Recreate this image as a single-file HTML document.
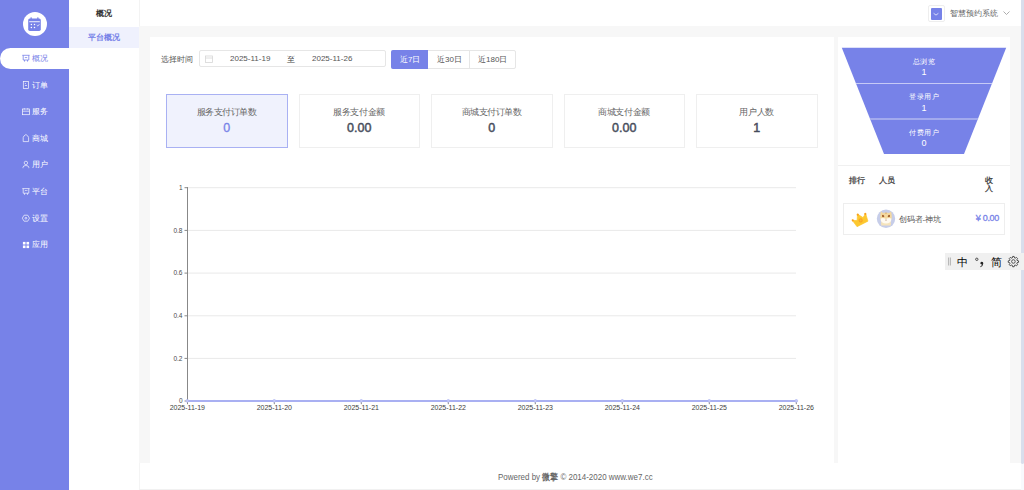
<!DOCTYPE html>
<html><head><meta charset="utf-8">
<style>
*{margin:0;padding:0;box-sizing:border-box}
html,body{width:1024px;height:490px;overflow:hidden;background:#fff;font-family:"Liberation Sans",sans-serif;color:#333}
.abs{position:absolute}
#side{left:0;top:0;width:69px;height:490px;background:#7782e8}
#logo{left:23px;top:12px;width:24px;height:24px;border-radius:50%;background:#fff}
.mi{position:absolute;left:0;width:69px;height:21px;color:#fff;font-size:8px;line-height:22px;font-weight:500}
.mi .ic{position:absolute;left:22px;top:7px;width:7px;height:7px}
.mi .tx{position:absolute;left:32px;top:0}
.mi.on{background:#fff;color:#7782e8;border-radius:11px 0 0 11px;width:70px}
#col2{left:69px;top:0;width:70px;height:490px;background:#fff}
#col2 .hd{position:absolute;left:0;top:0;width:70px;height:26px;line-height:27px;text-align:center;font-size:8px;font-weight:bold;color:#333}
#col2 .it{position:absolute;left:0;top:27px;width:70px;height:21px;line-height:21px;text-align:center;font-size:8px;font-weight:bold;color:#7782e8;background:#eff1fd}
#main{left:139px;top:26px;width:882px;height:437px;background:#f7f7f7}
#hdr{left:139px;top:0;width:882px;height:26px;background:#fff;border-left:1px solid #f3f3f3}
#card{left:150px;top:37px;width:684px;height:426px;background:#fff}
#rp{left:838px;top:37px;width:172px;height:426px;background:#fff}
#foot{left:139px;top:463px;width:882px;height:27px;background:#fff;border-bottom:1px solid #f1f1f1;border-left:1px solid #f4f4f4}
#sb{left:1021px;top:0;width:3px;height:463.5px;background:#d9deec;border-radius:0 0 2px 2px}
#sbt{left:1021px;top:463.5px;width:3px;height:26.5px;background:#f8f9fd}
.lbl{position:absolute;font-size:8px;color:#555;white-space:nowrap}
.stat{position:absolute;top:94px;width:121.5px;height:54px;border:1px solid #efefef;background:#fff;text-align:center}
.stat .t{position:absolute;left:0;right:0;top:11.3px;font-size:9px;letter-spacing:-.45px;text-indent:-.45px;color:#666;line-height:12px}
.stat .v{position:absolute;left:0;right:0;top:26px;font-size:12.5px;font-weight:normal;-webkit-text-stroke:.45px #464c5b;color:#464c5b;line-height:15px}
.stat.on{background:#f0f2fd;border-color:#a9b1f3}
.stat.on .v{color:#7782e8;-webkit-text-stroke:.3px #7782e8}
</style></head><body>
<div id="side" class="abs"></div>
<div id="logo" class="abs"></div>
<div class="mi on" style="top:48px"><span class="tx">概况</span></div>
<div class="mi" style="top:74.6px"><span class="tx">订单</span></div>
<div class="mi" style="top:101.2px"><span class="tx">服务</span></div>
<div class="mi" style="top:127.8px"><span class="tx">商城</span></div>
<div class="mi" style="top:154.4px"><span class="tx">用户</span></div>
<div class="mi" style="top:181px"><span class="tx">平台</span></div>
<div class="mi" style="top:207.6px"><span class="tx">设置</span></div>
<div class="mi" style="top:234.2px"><span class="tx">应用</span></div>

<svg class="abs" style="left:0;top:0" width="69" height="260" viewBox="0 0 69 260">
 <!-- logo calendar -->
 <g fill="#7782e8">
  <rect x="28.2" y="18.5" width="12.6" height="12.4" rx="1.6"/>
  <rect x="30.5" y="17.2" width="1.3" height="2.5" rx=".6"/>
  <rect x="37.2" y="17.2" width="1.3" height="2.5" rx=".6"/>
 </g>
 <rect x="29.2" y="21.3" width="10.6" height="0.9" fill="#fff"/>
 <g fill="#fff">
  <circle cx="31.4" cy="24.4" r=".75"/><circle cx="34.5" cy="24.4" r=".75"/>
  <circle cx="31.4" cy="27.4" r=".75"/><circle cx="34.5" cy="27.4" r=".75"/>
 </g>
 <path d="M36.8 25.2 l.9 .8 l1.6 -1.7" stroke="#fff" stroke-width=".8" fill="none"/>
 <!-- 概况 active -->
 <g stroke="#7782e8" stroke-width=".8" fill="none">
  <path d="M22.3 55.3 H29.6 M23.2 55.3 V60 H28.8 V55.3 M24.5 60 V61.6 M27.5 60 V61.6 M24.8 57.6 H27.2"/>
 </g>
 <g stroke="#fff" stroke-width=".72" fill="none" opacity=".95">
  <!-- 订单 -->
  <rect x="23.3" y="81.5" width="5.3" height="6.9"/>
  <path d="M24.9 83.6 H26 M24.9 85.5 H27"/>
  <!-- 服务 -->
  <rect x="22.6" y="109" width="6.8" height="5.7"/>
  <path d="M22.6 111.2 H29.4 M24.3 108.2 V109.5 M27.7 108.2 V109.5"/>
  <!-- 商城 -->
  <path d="M23.2 141.6 V137.6 Q23.4 135.9 25.9 134.5 Q28.4 135.9 28.6 137.6 V141.6 Z"/>
  <!-- 用户 -->
  <circle cx="25.9" cy="162.9" r="1.7"/>
  <path d="M23 168.2 V167.4 Q23 165.5 25.9 165.5 Q28.8 165.5 28.8 167.4 V168.2"/>
  <!-- 平台 -->
  <path d="M22.3 188.6 H29.6 M23.2 188.6 V193.2 H28.8 V188.6 M24.5 193.2 V194.8 M27.5 193.2 V194.8 M24.6 191.2 L25.6 190.2 L26.4 191 L27.4 190"/>
  <!-- 设置 -->
  <path d="M24.1 215.2 H27.7 L29.5 218.2 L27.7 221.2 H24.1 L22.3 218.2 Z"/>
  <circle cx="25.9" cy="218.2" r=".9"/>
 </g>
 <g fill="#fff">
  <rect x="22.9" y="241.9" width="2.6" height="2.6"/><rect x="26.5" y="241.9" width="2.6" height="2.6"/>
  <rect x="22.9" y="245.5" width="2.6" height="2.6"/><rect x="26.5" y="245.5" width="2.6" height="2.6"/>
 </g>
</svg>
<div id="col2" class="abs"><div class="hd">概况</div><div class="it">平台概况</div></div>
<div id="hdr" class="abs"></div>
<div id="main" class="abs"></div>
<div id="card" class="abs"></div>
<div id="rp" class="abs"></div>
<div id="foot" class="abs"></div>
<div id="sb" class="abs"></div>
<div id="sbt" class="abs"></div>


<div class="abs" style="left:928px;top:5px;width:17px;height:17px;border:1px solid #eee;border-radius:2px;background:#fff"></div>
<div class="abs" style="left:930.5px;top:8px;width:11.5px;height:11.5px;background:#7782e8;border-radius:1px"></div>
<svg class="abs" style="left:930px;top:8px" width="12" height="12"><path d="M3.6 5.3 L6 7.1 L8.4 5.3" stroke="#fff" stroke-width=".7" fill="none"/></svg>
<div class="lbl" style="left:950px;top:8.2px;font-size:8px;color:#5f5f5f">智慧预约系统</div>
<svg class="abs" style="left:1002px;top:10px" width="9" height="7"><path d="M1.5 1.5 L4.5 4.5 L7.5 1.5" stroke="#999" stroke-width=".8" fill="none"/></svg>
<div class="lbl" style="left:160.5px;top:53.5px;font-size:8px">选择时间</div>
<div class="abs" style="left:199px;top:50px;width:187px;height:17px;border:1px solid #e6e6e6;border-radius:2px"></div>
<svg class="abs" style="left:205px;top:55px" width="8" height="8"><rect x=".5" y="1" width="7" height="6.5" fill="none" stroke="#d6d6d6" stroke-width=".8"/><path d="M.5 3 H7.5" stroke="#d6d6d6" stroke-width=".8"/></svg>
<div class="lbl" style="left:230px;top:54.4px">2025-11-19</div>
<div class="lbl" style="left:287px;top:54.4px;color:#444">至</div>
<div class="lbl" style="left:312px;top:54.4px">2025-11-26</div>

<div class="abs" style="left:391px;top:50px;width:125px;height:19px;border:1px solid #e6e6e6;border-radius:2px"></div>
<div class="abs" style="left:391px;top:50px;width:37px;height:19px;background:#7782e8;border-radius:2px 0 0 2px"></div>
<div class="abs" style="left:469px;top:50px;width:1px;height:19px;background:#e6e6e6"></div>
<div class="lbl" style="left:400px;top:54.2px;color:#fff">近7日</div>
<div class="lbl" style="left:437px;top:54.2px">近30日</div>
<div class="lbl" style="left:478px;top:54.2px">近180日</div>

<div class="stat on" style="left:166px"><div class="t">服务支付订单数</div><div class="v">0</div></div>
<div class="stat" style="left:298.5px"><div class="t">服务支付金额</div><div class="v">0.00</div></div>
<div class="stat" style="left:431px"><div class="t">商城支付订单数</div><div class="v">0</div></div>
<div class="stat" style="left:563.5px"><div class="t">商城支付金额</div><div class="v">0.00</div></div>
<div class="stat" style="left:696px"><div class="t">用户人数</div><div class="v">1</div></div>


<svg class="abs" style="left:0;top:0" width="1024" height="490">
 <g stroke="#e9e9e9" stroke-width="1">
  <path d="M187 187.7 H796 M187 230.4 H796 M187 273.1 H796 M187 315.8 H796 M187 358.4 H796"/>
 </g>
 <path d="M187.5 187 V401.5" stroke="#888" stroke-width="1"/>
 <g stroke="#888" stroke-width="1">
  <path d="M184.5 187.7 H187.5 M184.5 230.4 H187.5 M184.5 273.1 H187.5 M184.5 315.8 H187.5 M184.5 358.4 H187.5 M184.5 401 H187.5"/>
  <path d="M274.3 401 V404.2 M361.3 401 V404.2 M448.3 401 V404.2 M535.3 401 V404.2 M622.3 401 V404.2 M709.3 401 V404.2 M796.3 401 V404.2 M187.5 401 V404.2"/>
 </g>
 <path d="M187.3 401 H796.3" stroke="#a9b0f2" stroke-width="2"/>
 <g fill="#c3c8f6" stroke="#a9b0f2" stroke-width=".6">
  <circle cx="187.3" cy="400.9" r="1.4"/><circle cx="274.3" cy="400.9" r="1.4"/><circle cx="361.3" cy="400.9" r="1.4"/><circle cx="448.3" cy="400.9" r="1.4"/>
  <circle cx="535.3" cy="400.9" r="1.4"/><circle cx="622.3" cy="400.9" r="1.4"/><circle cx="709.3" cy="400.9" r="1.4"/><circle cx="796.3" cy="400.9" r="1.4"/>
 </g>
 <g font-family="Liberation Sans" font-size="6.5" fill="#4a4a4a" text-anchor="end">
  <text x="182.5" y="189.8">1</text><text x="182.5" y="232.5">0.8</text><text x="182.5" y="275.2">0.6</text>
  <text x="182.5" y="317.9">0.4</text><text x="182.5" y="360.6">0.2</text><text x="182.5" y="403">0</text>
 </g>
 <g font-family="Liberation Sans" font-size="7" fill="#3e3e3e" text-anchor="middle">
  <text x="187.3" y="410">2025-11-19</text><text x="274.3" y="410">2025-11-20</text><text x="361.3" y="410">2025-11-21</text><text x="448.3" y="410">2025-11-22</text>
  <text x="535.3" y="410">2025-11-23</text><text x="622.3" y="410">2025-11-24</text><text x="709.3" y="410">2025-11-25</text><text x="796.3" y="410">2025-11-26</text>
 </g>
</svg>

<svg class="abs" style="left:0;top:0" width="1024" height="490">
 <path d="M841.8 47.8 H1006.2 L964 154 H884 Z" fill="#7782e8"/>
 <path d="M855.7 82.9 H992.3 L991.9 83.9 H856.1 Z" fill="#c6caf6"/>
 <path d="M869.8 118.3 H978.2 L977.6 119.7 H870.4 Z" fill="#b2b7f1"/>
 <rect x="838" y="165" width="172" height="1" fill="#f0f0f0"/>
</svg>
<div class="lbl" style="left:838px;width:172px;text-align:center;top:56.5px;font-size:7px;letter-spacing:.6px;text-indent:.6px;font-weight:500;color:#fff">总浏览</div>
<div class="lbl" style="left:838px;width:172px;text-align:center;top:66.8px;font-size:9px;color:#fff">1</div>
<div class="lbl" style="left:838px;width:172px;text-align:center;top:92px;font-size:7px;letter-spacing:.6px;text-indent:.6px;font-weight:500;color:#fff">登录用户</div>
<div class="lbl" style="left:838px;width:172px;text-align:center;top:102.5px;font-size:9px;color:#fff">1</div>
<div class="lbl" style="left:838px;width:172px;text-align:center;top:127.5px;font-size:7px;letter-spacing:.6px;text-indent:.6px;font-weight:500;color:#fff">付费用户</div>
<div class="lbl" style="left:838px;width:172px;text-align:center;top:138px;font-size:9px;color:#fff">0</div>

<div class="lbl" style="left:848.5px;top:175.3px;font-size:8px;font-weight:bold;color:#4a4a4a">排行</div>
<div class="lbl" style="left:879px;top:175.3px;font-size:8px;font-weight:bold;color:#4a4a4a">人员</div>
<div class="lbl" style="left:985px;top:176.6px;font-size:8px;font-weight:bold;color:#4a4a4a;line-height:8.4px">收<br>入</div>
<div class="abs" style="left:843px;top:203px;width:162px;height:32px;border:1px solid #eee;background:#fff"></div>
<svg class="abs" style="left:0;top:0" width="1024" height="490">
 <g transform="translate(860 219) rotate(-27) translate(-7.5 -5.5)">
  <path d="M0 3.2 L4.2 5.6 L7.5 0 L10.8 5.6 L15 3.2 L13.6 11 H1.4 Z" fill="#fdc82f" stroke="#fdc82f" stroke-width=".6" stroke-linejoin="round"/>
  <circle cx="0.5" cy="3.4" r="1.1" fill="#f9a21d"/><circle cx="7.5" cy="0.6" r="1.1" fill="#f9a21d"/><circle cx="14.5" cy="3.4" r="1.1" fill="#f9a21d"/>
  <circle cx="7.5" cy="7" r="2.1" fill="#f8a425"/>
  <circle cx="7.5" cy="7" r="1" fill="#fbb833"/>
 </g>
 <circle cx="886" cy="218.8" r="9.2" fill="#c6cde9"/>
 <path d="M881.2 225.5 Q880.8 223 881.5 221.5 H890.5 Q891.2 223 890.8 225.5 Z" fill="#f5e3bb"/>
 <path d="M880.3 215 L880.9 211.6 L883 213 Q886 212.2 889 213 L891.1 211.6 L891.7 215 Q892.4 218.5 890.8 221.5 Q886 224.5 881.2 221.5 Q879.6 218.5 880.3 215 Z" fill="#f4d9a0"/>
 <path d="M880.6 218.6 Q883 217.4 886 219 Q889 217.4 891.4 218.6 Q891.4 221 890.2 222.2 Q886 224.6 881.8 222.2 Q880.6 221 880.6 218.6 Z" fill="#fffaf0"/>
 <path d="M882 215.2 Q883.6 214 884.4 216.6 Q883 217.8 882 216.6 Z" fill="#a4612f"/>
 <path d="M890 215.2 Q888.4 214 887.6 216.6 Q889 217.8 890 216.6 Z" fill="#a4612f"/>
 <path d="M885.3 212.8 Q886 214.6 886.7 212.8 Z" fill="#b7773f"/>
 <circle cx="886" cy="220" r=".5" fill="#7a4a2a"/>
</svg>
<div class="lbl" style="left:898.5px;top:214.3px;font-size:8px;color:#555">创码者-神坑</div>
<div class="lbl" style="left:975.8px;top:213.2px;font-size:9px;-webkit-text-stroke:.3px #7782e8;color:#7782e8;letter-spacing:-.3px">¥ 0.00</div>

<div class="abs" style="left:945px;top:253px;width:79px;height:17px;background:#f0f0f0"></div>
<svg class="abs" style="left:0;top:0" width="1024" height="490">
 <path d="M948.6 257.5 V265.5 M950.4 257.5 V265.5" stroke="#999" stroke-width=".7"/>
 <circle cx="976.8" cy="259.3" r="1.2" fill="none" stroke="#222" stroke-width=".75"/>
 <path d="M981.6 261.8 Q983.4 261.6 983.3 263.6 Q983.1 266.3 980.4 267.3 L980.1 266.7 Q981.8 265.8 981.9 264.5 Q980.2 264.4 980.3 263.1 Q980.5 261.9 981.6 261.8 Z" fill="#222"/>
 <path d="M1012.23 257.99 L1012.67 256.45 L1014.13 256.45 L1014.57 257.99 L1015.13 258.21 L1016.52 257.44 L1017.56 258.48 L1016.79 259.87 L1017.01 260.43 L1018.55 260.87 L1018.55 262.33 L1017.01 262.77 L1016.79 263.33 L1017.56 264.72 L1016.52 265.76 L1015.13 264.99 L1014.57 265.21 L1014.13 266.75 L1012.67 266.75 L1012.23 265.21 L1011.67 264.99 L1010.28 265.76 L1009.24 264.72 L1010.01 263.33 L1009.79 262.77 L1008.25 262.33 L1008.25 260.87 L1009.79 260.43 L1010.01 259.87 L1009.24 258.48 L1010.28 257.44 L1011.67 258.21 Z" fill="none" stroke="#333" stroke-width=".85" stroke-linejoin="round"/>
 <circle cx="1013.4" cy="261.5" r="1.8" fill="none" stroke="#333" stroke-width=".8"/>
</svg>
<div class="lbl" style="left:956.8px;top:254.5px;font-size:11px;font-weight:500;color:#000">中</div>
<div class="lbl" style="left:990.5px;top:254.5px;font-size:11px;font-weight:500;color:#000">简</div>
<div class="lbl" style="left:497.8px;top:470.6px;color:#666;font-size:9px;transform:scaleX(.885);transform-origin:0 0">Powered by <b>微擎</b> © 2014-2020 www.we7.cc</div>
</body></html>
